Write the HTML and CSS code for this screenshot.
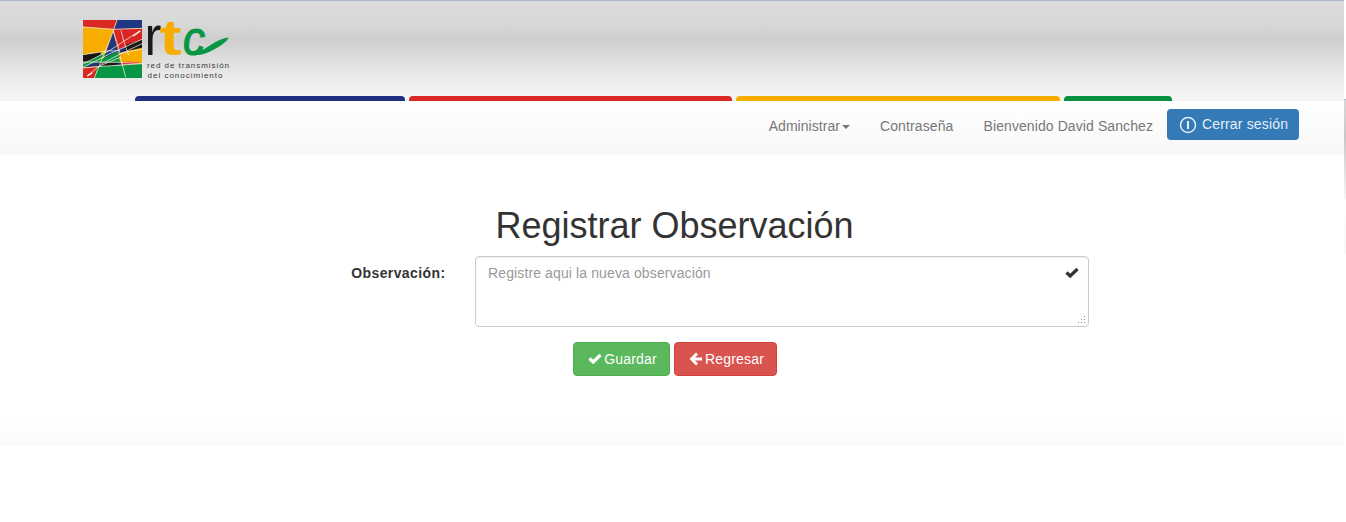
FILE: index.html
```html
<!DOCTYPE html>
<html lang="es">
<head>
<meta charset="utf-8">
<title>Registrar Observación</title>
<link rel="stylesheet" href="styles.css">
</head>
<body>
<div class="page">
  <header class="header">
    <svg class="logo" width="150" height="62" viewBox="0 0 150 62" role="img" aria-label="rtc red de transmisión del conocimiento">
      <svg x="1" y="1" width="59" height="58" viewBox="21 24 177 174" preserveAspectRatio="none">
        <rect x="21" y="24" width="177" height="174" fill="#f6ad00"/>
        <path d="M21 24H123L114 52L21 44Z" fill="#dc2822"/>
        <path d="M123 24H198V49L114 52Z" fill="#213784"/>
        <path d="M113 51L198 49V84L128 122Z" fill="#d92524"/>
        <path d="M111 57L128 123L84 139Z" fill="#203783"/>
        <path d="M21 128L76 120L67 145L21 151Z" fill="#191715"/>
        <path d="M70 145L125 118L132 151L27 154Z" fill="#079744"/>
        <path d="M21 152L137 150L140 158L21 166Z" fill="#213784"/>
        <path d="M128 112L149 104L158 124L130 135Z" fill="#213784"/>
        <path d="M151 98L198 83V107L144 119Z" fill="#1a1715"/>
        <path d="M132 123L198 111V150L137 151Z" fill="#f6ad00"/>
        <path d="M70 153L135 151L108 164L60 169Z" fill="#1a1715"/>
        <path d="M137 149L163 149L198 153V158L137 157Z" fill="#d92524"/>
        <path d="M21 168L65 164L56 198H21Z" fill="#dc2822"/>
        <path d="M65 164L198 155V198H55Z" fill="#079744"/>
        <path d="M21 156L100 117L68 147L21 166Z" fill="#079744"/>
        <g fill="none" stroke="#f5f2df" stroke-width="2.200">
          <path d="M21 45L114 52L198 49M123 24L103 81L77 143L55 198M111 56L126 101L138 157M135 55L144 91L158 130"/>
          <path d="M21 128L92 117L132 116M21 156L105 113L192 56M21 166L104 124L198 82M34 192L78 155L127 129L198 95M64 165L135 135M21 150L135 151L198 155M21 168L65 164L198 155M132 124L198 111M137 150L149 196"/>
          <path stroke-width="4" d="M171 73L193 57M34 192L49 182"/>
        </g>
      </svg>
      <text class="logo-r" x="62.500" y="36" textLength="17" lengthAdjust="spacingAndGlyphs">r</text>
      <text class="logo-t" x="77.500" y="36" textLength="22" lengthAdjust="spacingAndGlyphs">t</text>
      <text class="logo-c" x="101" y="35.500" textLength="22" lengthAdjust="spacingAndGlyphs">c</text>
      <path d="M105 33Q116 35 127 27Q138 19 147 18.500Q143 25 131 31Q115 40 105 33Z" fill="#079744"/>
      <text class="logo-tagline" x="65" y="48.500" textLength="82">red de transmisión</text>
      <text class="logo-tagline" x="65.500" y="58.500" textLength="75">del conocimiento</text>
    </svg>
    <div class="stripes"><span class="blue"></span><span class="red"></span><span class="yellow"></span><span class="green"></span></div>
  </header>
  <nav class="navbar">
    <a class="nav-item admin">Administrar<span class="caret"></span></a>
    <a class="nav-item password">Contraseña</a>
    <span class="nav-item welcome">Bienvenido David Sanchez</span>
    <button class="logout">
      <svg width="18" height="18" viewBox="0 0 18 18"><circle cx="9" cy="9" r="7.500" fill="none" stroke="currentColor" stroke-width="1.500"/><path d="M9 5V13" stroke="currentColor" stroke-width="2"/></svg>
      <span>Cerrar sesión</span>
    </button>
  </nav>
  <main class="content">
    <h1 class="title">Registrar Observación</h1>
    <div class="form-row">
      <label class="label" for="observation">Observación:</label>
      <div class="field">
        <textarea class="textarea" id="observation" placeholder="Registre aqui la nueva observación"></textarea>
        <svg class="valid" width="14" height="12" viewBox="0 0 14 12"><path d="M1.500 5.500L5.200 9L12.500 2" fill="none" stroke="currentColor" stroke-width="3.200"/></svg>
        <svg class="grip" width="9" height="9" viewBox="0 0 9 9"><path d="M7 0h1v1H7zM4 3h1v1H4zM7 3h1v1H7zM1 6h1v1H1zM4 6h1v1H4zM7 6h1v1H7z" fill="#888"/></svg>
      </div>
    </div>
    <div class="actions">
      <button class="button save"><svg width="14" height="12" viewBox="0 0 14 12"><path d="M1.500 5.500L5.200 9L12.500 2" fill="none" stroke="currentColor" stroke-width="3.200"/></svg><span>Guardar</span></button>
      <button class="button back"><svg width="14" height="14" viewBox="0 0 14 14"><path d="M8 1.500L2.500 7L8 12.500M3 7H13" fill="none" stroke="currentColor" stroke-width="2.800"/></svg><span>Regresar</span></button>
    </div>
  </main>
</div>
<div class="edge"></div>
</body>
</html>
```
FILE: styles.css
```css
* { box-sizing: border-box; }
body {
  margin: 0;
  height: 522px;
  display: flex;
  overflow: hidden;
  background: #fff;
  color: #333;
  font: 14px/20px "Liberation Sans", Arial, sans-serif;
}
.page { width: 1344px; }
.edge {
  width: 2px;
  height: 155px;
  margin-top: 99px;
  border-top: 1px solid #a9bfd5;
  background: linear-gradient(#d8d8d8, #c8c8c8 25%, #f5f5f5 64%, #fff 65%, #f7f7f7);
}
.header {
  height: 101px;
  padding: 18px 0 0 82px;
  border-top: 1px solid #aab7c9;
  background: linear-gradient(#dcdcdc, #d8d8d8 22%, #cecece 39%, #e2e2e2 63%, #f8f8f8);
}
.logo { display: block; overflow: visible; }
.logo-r { font: 56px "Liberation Sans", Arial, sans-serif; fill: #1c1a19; }
.logo-t { font: bold 50px "Liberation Sans", Arial, sans-serif; fill: #f6ad00; }
.logo-c {
  font: italic 49px "Liberation Sans", Arial, sans-serif;
  fill: #079744;
  stroke: #079744;
  stroke-width: 1.2px;
}
.logo-tagline { font: 8px "Liberation Sans", Arial, sans-serif; fill: #393939; }
.stripes {
  display: grid;
  grid-template-columns: 270px 323px 324px 108px;
  gap: 4px;
  height: 5px;
  margin: 15px 0 0 53px;
}
.stripes span { border-radius: 4px 4px 0 0; }
.blue { background: #203080; }
.red { background: #d92723; }
.yellow { background: #f5ad00; }
.green { background: #05913f; }
.navbar {
  display: flex;
  align-items: flex-start;
  height: 51px;
  padding: 8px 45px 0 0;
  justify-content: flex-end;
  background: linear-gradient(#fff, #f8f8f8);
  box-shadow: 0 1px 5px rgba(0, 0, 0, .075);
}
.nav-item { margin-top: 7px; color: #777; white-space: nowrap; }
.admin { margin-right: 30px; letter-spacing: .04px; }
.password { margin-right: 30px; letter-spacing: .12px; }
.welcome { margin-right: 14px; letter-spacing: .09px; }
.caret {
  display: inline-block;
  margin-left: 2px;
  vertical-align: middle;
  border-top: 4px solid;
  border-right: 4px solid transparent;
  border-left: 4px solid transparent;
}
.logout {
  display: flex;
  align-items: center;
  gap: 5px;
  width: 132px;
  height: 31px;
  padding: 0 0 0 12px;
  border: 0;
  border-radius: 4px;
  background: #337ab7;
  color: #e4f0fa;
  font: inherit;
  letter-spacing: .16px;
  white-space: nowrap;
}
.logout span { padding-bottom: 2px; }
.content {
  height: 294px;
  padding-top: 54px;
  background: linear-gradient(transparent 270px, #f9f9f9);
}
.title {
  margin: 0 0 10px;
  padding-left: 5px;
  font-size: 36px;
  font-weight: 400;
  line-height: 40px;
  text-align: center;
}
.form-row { display: flex; }
.label {
  width: 475px;
  padding: 7px 29.5px 0 0;
  text-align: right;
  font-weight: 700;
  letter-spacing: .4px;
}
.field { position: relative; width: 614px; height: 71px; }
.textarea {
  display: block;
  width: 100%;
  height: 100%;
  padding: 6px 12px;
  resize: none;
  border: 1px solid #ccc;
  border-radius: 4px;
  box-shadow: inset 0 1px 1px rgba(0, 0, 0, .075);
  background: #fff;
  font: inherit;
  letter-spacing: .12px;
}
.textarea::placeholder { color: #999; opacity: 1; }
.valid { position: absolute; top: 11px; right: 10px; }
.grip { position: absolute; right: 3px; bottom: 2px; }
.actions { display: flex; justify-content: center; gap: 4px; padding: 15px 0 0 6px; }
.button {
  display: flex;
  align-items: center;
  justify-content: center;
  gap: 2px;
  height: 34px;
  padding: 0 0 0 2px;
  border: 1px solid;
  border-radius: 4px;
  color: #fff;
  font: inherit;
  letter-spacing: .18px;
}
.save { width: 97px; background: #5cb85c; border-color: #4cae4c; }
.back { width: 103px; background: #d9534f; border-color: #d43f3a; }
```
